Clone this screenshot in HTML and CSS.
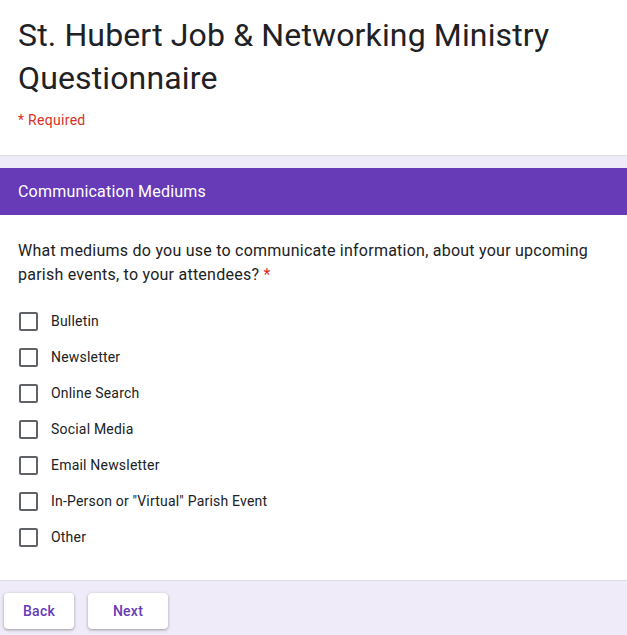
FILE: index.html
```html
<!DOCTYPE html>
<html>
<head>
<meta charset="utf-8">
<link rel="stylesheet" href="styles.css">
</head>
<body>
<div class="page">
  <div class="title-card">
    <h1 class="title">St. Hubert Job &amp; Networking Ministry Questionnaire</h1>
    <div class="required">* Required</div>
  </div>
  <div class="section-header">Communication Mediums</div>
  <div class="question-card">
    <div class="question">What mediums do you use to communicate information, about your upcoming parish events, to your attendees?&nbsp;<span class="star">*</span></div>
    <div class="options">
      <label class="option"><span class="box"></span><span class="label">Bulletin</span></label>
      <label class="option"><span class="box"></span><span class="label">Newsletter</span></label>
      <label class="option"><span class="box"></span><span class="label">Online Search</span></label>
      <label class="option"><span class="box"></span><span class="label">Social Media</span></label>
      <label class="option"><span class="box"></span><span class="label">Email Newsletter</span></label>
      <label class="option"><span class="box"></span><span class="label">In-Person or "Virtual" Parish Event</span></label>
      <label class="option"><span class="box"></span><span class="label">Other</span></label>
    </div>
  </div>
  <div class="footer">
    <button class="btn btn-back">Back</button>
    <button class="btn btn-next">Next</button>
  </div>
</div>
</body>
</html>
```
FILE: styles.css
```css
html, body {
  margin: 0;
  padding: 0;
  background: #f0ebf8;
}
body {
  font-family: Roboto, "Liberation Sans", sans-serif;
  color: #202124;
}
.page {
  display: flex;
  flex-direction: column;
  min-height: 635px;
}
.title-card {
  background: #fff;
  border-bottom: 1px solid #dadce0;
  padding: 14px 18px 25px;
}
.title {
  margin: 0;
  font-family: Roboto, "Liberation Sans", sans-serif;
  font-weight: 400;
  font-size: 32px;
  line-height: 43px;
  color: #202124;
  letter-spacing: 0.14px;
}
.required {
  margin-top: 10px;
  font-size: 14px;
  line-height: 20px;
  color: #d93025;
  letter-spacing: 0.3px;
}
.section-header {
  margin-top: 12px;
  background: #673ab7;
  color: #fff;
  height: 47px;
  display: flex;
  align-items: center;
  padding: 0 18px;
  font-size: 16px;
  letter-spacing: 0.2px;
}
.question-card {
  background: #fff;
  border-bottom: 1px solid #dadce0;
  padding: 24px 18px 25px;
}
.question {
  font-size: 16px;
  line-height: 24px;
  color: #202124;
  letter-spacing: 0.24px;
  padding-right: 10px;
}
.star {
  color: #d93025;
}
.options {
  margin-top: 16px;
  display: flex;
  flex-direction: column;
}
.option {
  height: 36px;
  display: flex;
  align-items: center;
}
.box {
  box-sizing: border-box;
  width: 19px;
  height: 19px;
  margin-left: 1px;
  border: 2px solid #5f6368;
  border-radius: 2px;
}
.label {
  margin-left: 13px;
  font-size: 14px;
  color: #202124;
  letter-spacing: 0.2px;
}
.footer {
  display: flex;
  gap: 14px;
  padding: 12px 4px;
}
.btn {
  height: 36px;
  border: none;
  background: #fff;
  border-radius: 4px;
  box-shadow: 0 1px 2px rgba(60,64,67,0.3), 0 1px 3px 1px rgba(60,64,67,0.15);
  color: #673ab7;
  font-family: Roboto, "Liberation Sans", sans-serif;
  font-size: 14px;
  font-weight: 500;
  letter-spacing: 0.25px;
  padding: 0;
}
.btn-back { width: 70px; }
.btn-next { width: 80px; }
```
